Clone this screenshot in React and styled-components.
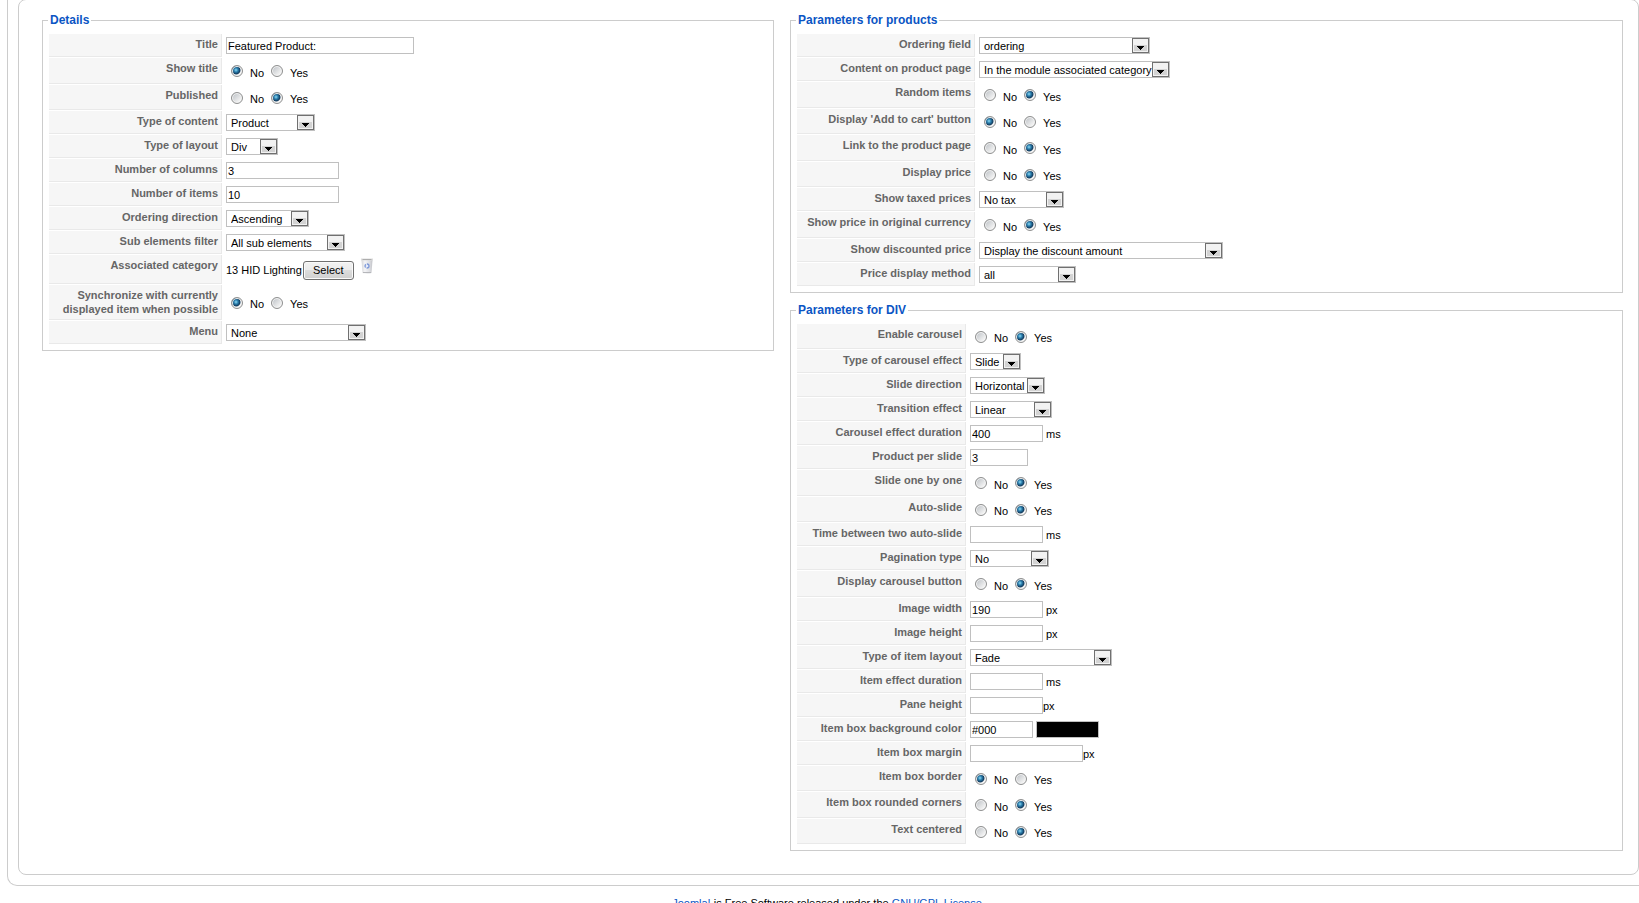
import React, { useState } from 'react';
import styled, { createGlobalStyle } from 'styled-components';

const GlobalStyle = createGlobalStyle`
  html {
    scrollbar-width: none;
    overflow-x: hidden;
  }
  body {
    margin: 0;
    background: #fff;
    color: #000;
    font: 11px/14px "Liberation Sans", Arial, sans-serif;
  }
  input, select, button {
    font: inherit;
    color: inherit;
    box-sizing: border-box;
    margin: 0;
  }
`;

const Page = styled.div`
  overflow: hidden;
  padding-left: 7px;
`;

const Frame = styled.div`
  margin-right: -11px;
  padding: 0 10px 10px;
  border: 1px solid #ccc;
  border-top: 0;
  border-radius: 0 0 10px 10px;
`;

const Panel = styled.main`
  display: flex;
  align-items: flex-start;
  gap: 16px;
  margin-top: -1px;
  padding: 13px 15px 23px 23px;
  border: 1px solid #ccc;
  border-radius: 8px;
`;

const Column = styled.div`
  flex: ${(p) => p.$grow} 1 0;
  min-width: 0;
  display: flex;
  flex-direction: column;
  gap: 10px;
`;

const Fieldset = styled.fieldset`
  margin: 0;
  min-width: 0;
  padding: 5px;
  border: 1px solid #ccc;
`;

const Legend = styled.legend`
  padding: 0 2px;
  color: #0b55c4;
  font-size: 12px;
  line-height: 15px;
  font-weight: bold;
`;

const FormTable = styled.table`
  border-collapse: separate;
  border-spacing: 1px;
`;

const LabelCell = styled.th`
  box-sizing: border-box;
  width: ${(p) => p.$width}px;
  height: ${(p) => p.$height}px;
  padding: 3px 3px 0 2px;
  vertical-align: top;
  text-align: right;
  font-weight: bold;
  color: #666;
  background: #f6f6f6;
  border-right: 1px solid #e9e9e9;
  border-bottom: 1px solid #e9e9e9;
`;

const FieldCell = styled.td`
  padding: 0 3px;
  vertical-align: middle;
  white-space: nowrap;
`;

const Line = styled.div`
  display: flex;
  align-items: center;
  gap: ${(p) => p.$gap || 0}px;
`;

const TextInput = styled.input`
  width: ${(p) => p.$width}px;
  height: 17px;
  padding: 0 1px;
  border: 1px solid #c0c0c0;
  border-radius: 0;
  background: ${(p) => p.$fill || '#fff'};
`;

const SelectBox = styled.span`
  display: inline-grid;
  width: ${(p) => p.$width}px;
  height: 17px;
  vertical-align: top;
  & > * {
    grid-area: 1 / 1;
  }
`;

const NativeSelect = styled.select`
  appearance: none;
  width: 100%;
  height: 17px;
  padding: 0 17px 0 4px;
  border: 1px solid #c0c0c0;
  border-radius: 0;
  background: #fff;
`;

const Arrow = styled.svg`
  justify-self: end;
  align-self: center;
  margin-right: 1px;
  pointer-events: none;
`;

const RadioGroup = styled.div`
  display: flex;
  align-items: center;
  gap: 7px;
  padding-left: 5px;
`;

const Radio = styled.input`
  appearance: none;
  width: 12px;
  height: 12px;
  border: 1px solid #8e8f8f;
  border-radius: 50%;
  background: linear-gradient(135deg, #c4c8cc 15%, #f4f4f4 80%);
  box-shadow: inset 0 0 0 1px #f4f4f4;
  &:checked {
    background: radial-gradient(circle at 4px 4px, #8fdcf5 0, #2b7fae 2px, #123a5c 4px, #f4f4f4 5px);
  }
`;

const RadioLabel = styled.label`
  padding-top: 3px;
`;

const CategoryLine = styled.div`
  display: flex;
  align-items: flex-end;
  gap: 7px;
  height: 22px;
  margin-bottom: 2px;
`;

const SelectButton = styled.button`
  width: 51px;
  height: 19px;
  padding: 0;
  border: 1px solid #707070;
  border-radius: 3px;
  box-shadow: inset 0 0 0 1px #fafafa;
  background: linear-gradient(#f2f2f2 0, #ebebeb 50%, #dddddd 50%, #cfcfcf 100%);
`;

const IconButton = styled.button`
  align-self: flex-start;
  display: block;
  width: 12px;
  height: 16px;
  padding: 0;
  border: 0;
  background: none;
`;

const Footer = styled.footer`
  margin-right: -11px;
  padding: 10px 0 6px;
  text-align: center;
`;

const FooterLink = styled.a`
  color: #0b55c4;
  text-decoration: none;
`;

function ArrowIcon() {
  return (
    <Arrow width="17" height="15" viewBox="0 0 17 15" aria-hidden="true">
      <rect x="0.5" y="0.5" width="16" height="14" fill="#f2f2f2" stroke="#707070" />
      <rect x="2" y="7" width="13" height="6" fill="#d3d3d3" />
      <path d="M5 8h7v1h-1v1h-1v1H9v1H8v-1H7v-1H6V9H5z" fill="#000" />
    </Arrow>
  );
}

function TrashIcon() {
  return (
    <svg width="12" height="16" viewBox="0 0 12 16" aria-hidden="true">
      <defs>
        <linearGradient id="bin" x1="0" x2="1">
          <stop offset="0" stopColor="#d5d6d9" />
          <stop offset="0.3" stopColor="#f4f4f6" />
          <stop offset="0.7" stopColor="#dfe0e4" />
          <stop offset="1" stopColor="#c2c3c8" />
        </linearGradient>
      </defs>
      <path d="M0.500 2h11l-1 13q-4.500 1.500-9 0z" fill="url(#bin)" />
      <path d="M0 0.500h12v2H0z" fill="#dcdcdc" />
      <path d="M1.500 1h9v1h-9z" fill="#adadad" />
      <circle cx="6" cy="8" r="2" fill="#e6ebf8" stroke="#7d98d8" strokeWidth="1.300" strokeDasharray="3.200 1" />
      <path d="M2 14.500h8" stroke="#b5b6ba" strokeWidth="1" />
    </svg>
  );
}

function Dropdown({ id, value, width }) {
  return (
    <SelectBox $width={width}>
      <NativeSelect id={id} defaultValue={value}>
        <option>{value}</option>
      </NativeSelect>
      <ArrowIcon />
    </SelectBox>
  );
}

function YesNo({ id, value }) {
  const [choice, setChoice] = useState(value);
  return (
    <RadioGroup role="radiogroup" aria-labelledby={`${id}-label`}>
      {['No', 'Yes'].map((option) => (
        <React.Fragment key={option}>
          <Radio
            type="radio"
            id={`${id}-${option}`}
            name={id}
            checked={choice === option}
            onChange={() => setChoice(option)}
          />
          <RadioLabel htmlFor={`${id}-${option}`}>{option}</RadioLabel>
        </React.Fragment>
      ))}
    </RadioGroup>
  );
}

function Category({ value }) {
  return (
    <CategoryLine>
      <Line $gap={1}>
        <span>{value}</span>
        <SelectButton type="button">Select</SelectButton>
      </Line>
      <IconButton type="button" aria-label="Delete">
        <TrashIcon />
      </IconButton>
    </CategoryLine>
  );
}

function Field({ id, row }) {
  switch (row.kind) {
    case 'select':
      return <Dropdown id={id} value={row.value} width={row.width} />;
    case 'radio':
      return <YesNo id={id} value={row.value} />;
    case 'category':
      return <Category value={row.value} />;
    case 'color':
      return (
        <Line $gap={3}>
          <TextInput id={id} type="text" defaultValue={row.value} $width={row.width} />
          <TextInput type="text" readOnly aria-label="Color preview" $width={row.width} $fill={row.value} />
        </Line>
      );
    default:
      return (
        <Line $gap={row.gap}>
          <TextInput id={id} type="text" defaultValue={row.value} $width={row.width} />
          {row.unit && <span>{row.unit}</span>}
        </Line>
      );
  }
}

const text = (label, value, width, unit, gap) => ({ kind: 'text', label, value, width, unit, gap, height: 23 });
const select = (label, value, width) => ({ kind: 'select', label, value, width, height: 23 });
const radio = (label, value, height = 25) => ({ kind: 'radio', label, value, height });

const DETAILS = [
  text('Title', 'Featured Product:', 188),
  radio('Show title', 'No', 26),
  radio('Published', 'Yes'),
  select('Type of content', 'Product', 89),
  select('Type of layout', 'Div', 52),
  text('Number of columns', '3', 113),
  text('Number of items', '10', 113),
  select('Ordering direction', 'Ascending', 83),
  select('Sub elements filter', 'All sub elements', 119),
  { kind: 'category', label: 'Associated category', value: '13 HID Lighting', height: 29 },
  radio('Synchronize with currently displayed item when possible', 'No', 35),
  select('Menu', 'None', 140),
];

const PRODUCTS = [
  select('Ordering field', 'ordering', 171),
  select('Content on product page', 'In the module associated category', 191),
  radio('Random items', 'Yes', 26),
  radio("Display 'Add to cart' button", 'No'),
  radio('Link to the product page', 'Yes', 26),
  radio('Display price', 'Yes'),
  select('Show taxed prices', 'No tax', 85),
  radio('Show price in original currency', 'Yes', 26),
  select('Show discounted price', 'Display the discount amount', 244),
  select('Price display method', 'all', 97),
];

const DIV = [
  radio('Enable carousel', 'Yes'),
  select('Type of carousel effect', 'Slide', 51),
  select('Slide direction', 'Horizontal', 75),
  select('Transition effect', 'Linear', 82),
  text('Carousel effect duration', '400', 73, 'ms', 3),
  text('Product per slide', '3', 58),
  radio('Slide one by one', 'Yes', 26),
  radio('Auto-slide', 'Yes'),
  text('Time between two auto-slide', '', 73, 'ms', 3),
  select('Pagination type', 'No', 79),
  radio('Display carousel button', 'Yes', 26),
  text('Image width', '190', 73, 'px', 3),
  text('Image height', '', 73, 'px', 3),
  select('Type of item layout', 'Fade', 142),
  text('Item effect duration', '', 73, 'ms', 3),
  text('Pane height', '', 73, 'px', 0),
  { kind: 'color', label: 'Item box background color', value: '#000', width: 63, height: 23 },
  text('Item box margin', '', 113, 'px', 0),
  radio('Item box border', 'No'),
  radio('Item box rounded corners', 'Yes', 26),
  radio('Text centered', 'Yes'),
];

function Section({ name, title, rows, labelWidth }) {
  return (
    <Fieldset>
      <Legend>{title}</Legend>
      <FormTable>
        <tbody>
          {rows.map((row, i) => {
            const id = `${name}-${i}`;
            const grouped = row.kind === 'radio' || row.kind === 'category';
            return (
              <tr key={id}>
                <LabelCell scope="row" $width={labelWidth} $height={row.height}>
                  {grouped ? (
                    <span id={`${id}-label`}>{row.label}</span>
                  ) : (
                    <label htmlFor={id}>{row.label}</label>
                  )}
                </LabelCell>
                <FieldCell>
                  <Field id={id} row={row} />
                </FieldCell>
              </tr>
            );
          })}
        </tbody>
      </FormTable>
    </Fieldset>
  );
}

export default function App() {
  return (
    <Page>
      <GlobalStyle />
      <Frame>
        <Panel>
          <Column $grow={732}>
            <Section name="details" title="Details" rows={DETAILS} labelWidth={173} />
          </Column>
          <Column $grow={833}>
            <Section name="products" title="Parameters for products" rows={PRODUCTS} labelWidth={178} />
            <Section name="div" title="Parameters for DIV" rows={DIV} labelWidth={169} />
          </Column>
        </Panel>
      </Frame>
      <Footer>
        <FooterLink href="#joomla">Joomla!</FooterLink> is Free Software released under the{' '}
        <FooterLink href="#license">GNU/GPL License.</FooterLink>
      </Footer>
    </Page>
  );
}
